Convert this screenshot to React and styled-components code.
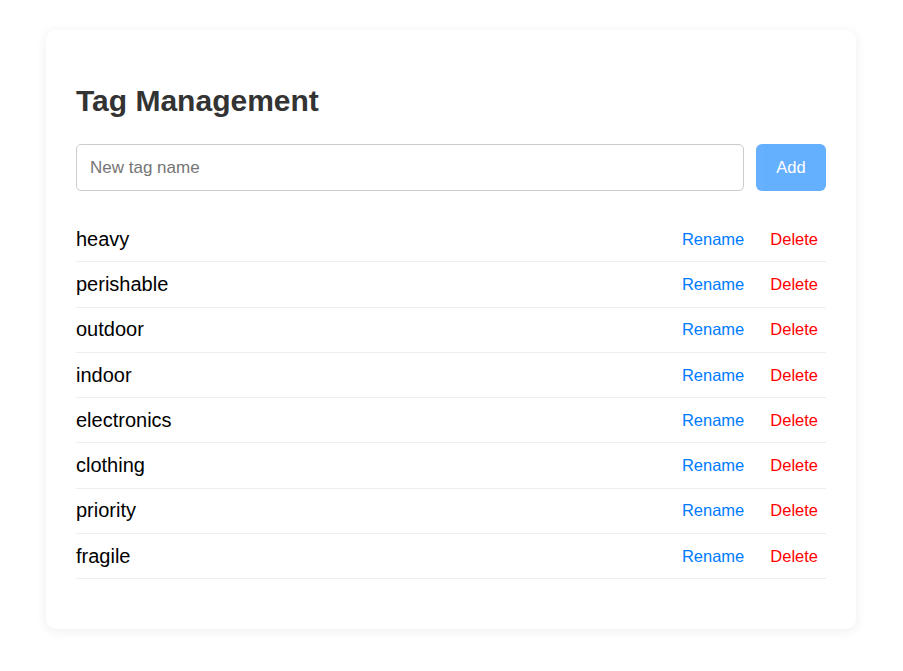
import React, { useState } from 'react';
import styled, { createGlobalStyle } from 'styled-components';

const GlobalStyle = createGlobalStyle`
  body {
    margin: 0;
    background: #fff;
    font-family: "Liberation Sans", Arial, sans-serif;
  }
`;

const Page = styled.div`
  padding: 30px 47px 30px 46px;
`;

const Card = styled.div`
  box-sizing: border-box;
  width: 810px;
  padding: 30px;
  background: #fff;
  border-radius: 10px;
  box-shadow: 0 2px 12px rgba(0, 0, 0, 0.07);
`;

const Title = styled.h2`
  margin: 24px 0 26px;
  font-size: 30px;
  font-weight: 700;
  color: #333;
`;

const AddRow = styled.form`
  display: flex;
  gap: 12px;
  height: 47px;
  margin-bottom: 26px;
`;

const Input = styled.input`
  flex: 1;
  box-sizing: border-box;
  padding: 0 13px;
  border: 1px solid #ccc;
  border-radius: 5px;
  font-family: inherit;
  font-size: 17px;
  color: #333;

  &::placeholder {
    color: #757575;
  }
`;

const AddButton = styled.button`
  min-width: 70px;
  padding: 0 20px;
  border: none;
  border-radius: 6px;
  background: #007bff;
  color: #fff;
  font-family: inherit;
  font-size: 16.5px;
  cursor: pointer;

  &:disabled {
    opacity: 0.6;
    cursor: default;
  }
`;

const TagList = styled.ul`
  list-style: none;
  margin: 0 0 20px;
  padding: 0;
`;

const TagRow = styled.li`
  display: flex;
  align-items: center;
  min-height: 44.3px;
  border-bottom: 1px solid #eee;
`;

const TagName = styled.span`
  flex: 1;
  font-size: 20px;
  color: #000;
`;

const LinkButton = styled.button`
  margin-left: 10px;
  padding: 5px 8px;
  border: none;
  background: none;
  font-family: inherit;
  font-size: 16.5px;
  color: ${({ danger }) => (danger ? '#ff0000' : '#007bff')};
  cursor: pointer;
`;

const INITIAL_TAGS = [
  'heavy',
  'perishable',
  'outdoor',
  'indoor',
  'electronics',
  'clothing',
  'priority',
  'fragile',
];

const App = () => {
  const [tags] = useState(INITIAL_TAGS);
  const [name, setName] = useState('');

  return (
    <Page>
      <GlobalStyle />
      <Card>
        <Title>Tag Management</Title>
        <AddRow onSubmit={(e) => e.preventDefault()}>
          <Input
              placeholder="New tag name"
              value={name}
              onChange={(e) => setName(e.target.value)} />
          <AddButton type="submit" disabled={!name.trim()}>Add</AddButton>
        </AddRow>
        <TagList>
          {
            tags.map((tag) => (
              <TagRow key={tag}>
                <TagName>{tag}</TagName>
                <LinkButton type="button">Rename</LinkButton>
                <LinkButton type="button" danger>Delete</LinkButton>
              </TagRow>
            ))
          }
        </TagList>
      </Card>
    </Page>
  );
};

export default App;
